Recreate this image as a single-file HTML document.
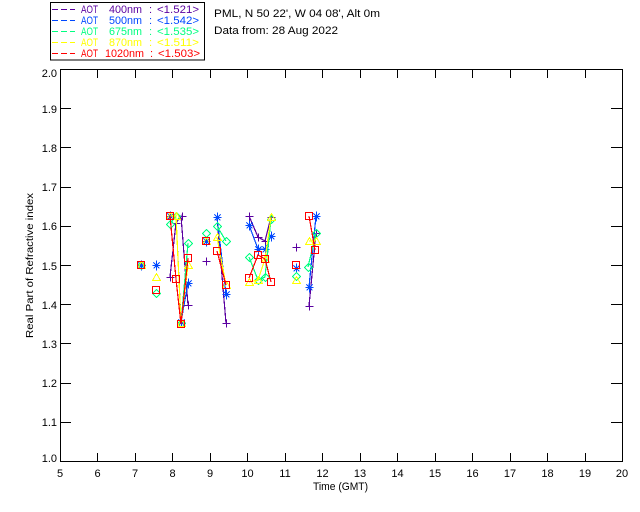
<!DOCTYPE html>
<html><head><meta charset="utf-8"><style>
html,body{margin:0;padding:0;background:#fff;width:640px;height:512px;overflow:hidden}
svg{display:block}
text{font-family:"Liberation Sans",sans-serif;font-size:11px;fill:#000}
.l text{font-size:11px}
.g{shape-rendering:crispEdges;fill:none;stroke-width:1}
.m>path{stroke-width:1.2}
</style></head><body>
<svg width="640" height="512" viewBox="0 0 640 512" xmlns="http://www.w3.org/2000/svg">
<defs>
<g id="p" transform="translate(.5 .5)"><path d="M-4 0H4M0-4V4"/></g>
<g id="a" transform="translate(.5 .5)"><path d="M-4 0H4M0-5V5M-3-3L3 3M3-3L-3 3M-1-1H1V1H-1Z"/></g>
<g id="d" transform="translate(.5 .5)"><path d="M0-4L4 0L0 4L-4 0Z"/></g>
<g id="t" transform="translate(.5 .5)"><path d="M0-4L4 3H-4Z"/></g>
<g id="s"><rect x="-3.5" y="-3.5" width="7" height="7"/></g>
</defs>
<g class="g" stroke="#000">
<rect x="50.5" y="2.5" width="154" height="57.5"/>
<rect x="60.5" y="69.5" width="562" height="392"/>
<path d="M60 422.5h11M60 383.5h11M60 343.5h11M60 304.5h11M60 265.5h11M60 226.5h11M60 187.5h11M60 147.5h11M60 108.5h11M622 422.5h-11M622 383.5h-11M622 343.5h-11M622 304.5h-11M622 265.5h-11M622 226.5h-11M622 187.5h-11M622 147.5h-11M622 108.5h-11"/>
<path d="M97.5 461v-8M135.5 461v-8M172.5 461v-8M210.5 461v-8M247.5 461v-8M285.5 461v-8M322.5 461v-8M360.5 461v-8M397.5 461v-8M435.5 461v-8M472.5 461v-8M510.5 461v-8M547.5 461v-8M585.5 461v-8M97.5 70v8M135.5 70v8M172.5 70v8M210.5 70v8M247.5 70v8M285.5 70v8M322.5 70v8M360.5 70v8M397.5 70v8M435.5 70v8M472.5 70v8M510.5 70v8M547.5 70v8M585.5 70v8"/>
</g>
<g class="g" stroke-dasharray="6 3">
<path stroke="#5a00a0" d="M52 9.5H75"/>
<path stroke="#0048ff" d="M52 20.5H75"/>
<path stroke="#00ff80" d="M52 31.5H75"/>
<path stroke="#ffff00" d="M52 42.5H75"/>
<path stroke="#ff0000" d="M52 53.5H75"/>
</g>
<g class="l">
<g style="fill:#5a00a0"><text style="fill:inherit" x="81" y="13" textLength="17" lengthAdjust="spacingAndGlyphs">AOT</text><text style="fill:inherit" x="109" y="13" textLength="33" lengthAdjust="spacingAndGlyphs">400nm</text><text style="fill:inherit" x="149" y="13">:</text><text style="fill:inherit" x="157" y="13" textLength="42" lengthAdjust="spacingAndGlyphs">&lt;1.521&gt;</text></g>
<g style="fill:#0048ff"><text style="fill:inherit" x="81" y="24" textLength="17" lengthAdjust="spacingAndGlyphs">AOT</text><text style="fill:inherit" x="109" y="24" textLength="33" lengthAdjust="spacingAndGlyphs">500nm</text><text style="fill:inherit" x="149" y="24">:</text><text style="fill:inherit" x="157" y="24" textLength="42" lengthAdjust="spacingAndGlyphs">&lt;1.542&gt;</text></g>
<g style="fill:#00ff80"><text style="fill:inherit" x="81" y="35" textLength="17" lengthAdjust="spacingAndGlyphs">AOT</text><text style="fill:inherit" x="109" y="35" textLength="33" lengthAdjust="spacingAndGlyphs">675nm</text><text style="fill:inherit" x="149" y="35">:</text><text style="fill:inherit" x="157" y="35" textLength="42" lengthAdjust="spacingAndGlyphs">&lt;1.535&gt;</text></g>
<g style="fill:#ffff00"><text style="fill:inherit" x="81" y="46" textLength="17" lengthAdjust="spacingAndGlyphs">AOT</text><text style="fill:inherit" x="109" y="46" textLength="33" lengthAdjust="spacingAndGlyphs">870nm</text><text style="fill:inherit" x="149" y="46">:</text><text style="fill:inherit" x="157" y="46" textLength="42" lengthAdjust="spacingAndGlyphs">&lt;1.511&gt;</text></g>
<g style="fill:#ff0000"><text style="fill:inherit" x="81" y="57" textLength="17" lengthAdjust="spacingAndGlyphs">AOT</text><text style="fill:inherit" x="105" y="57" textLength="39" lengthAdjust="spacingAndGlyphs">1020nm</text><text style="fill:inherit" x="150" y="57">:</text><text style="fill:inherit" x="158" y="57" textLength="42" lengthAdjust="spacingAndGlyphs">&lt;1.503&gt;</text></g>
</g>
<text x="214" y="17" textLength="166" lengthAdjust="spacingAndGlyphs">PML, N 50 22', W 04 08', Alt 0m</text>
<text x="214" y="34" textLength="124" lengthAdjust="spacingAndGlyphs">Data from: 28 Aug 2022</text>
<g text-anchor="end">
<text x="57" y="77">2.0</text><text x="57" y="113">1.9</text><text x="57" y="152">1.8</text><text x="57" y="191">1.7</text><text x="57" y="230">1.6</text><text x="57" y="270">1.5</text><text x="57" y="309">1.4</text><text x="57" y="348">1.3</text><text x="57" y="387">1.2</text><text x="57" y="426">1.1</text><text x="57" y="462">1.0</text>
</g>
<g text-anchor="middle">
<text x="60" y="477">5</text><text x="97.5" y="477">6</text><text x="135" y="477">7</text><text x="172.5" y="477">8</text><text x="210" y="477">9</text><text x="247.5" y="477">10</text><text x="285" y="477">11</text><text x="322.5" y="477">12</text><text x="360" y="477">13</text><text x="397.5" y="477">14</text><text x="435" y="477">15</text><text x="472.5" y="477">16</text><text x="510" y="477">17</text><text x="547.5" y="477">18</text><text x="585" y="477">19</text><text x="622" y="477">20</text>
</g>
<text x="313" y="490" textLength="55" lengthAdjust="spacingAndGlyphs">Time (GMT)</text>
<text transform="translate(33 338) rotate(-90)" x="0" y="0" style="font-size:10.5px" textLength="145" lengthAdjust="spacingAndGlyphs">Real Part of Refractive index</text>

<g class="g m" stroke="#5a00a0">
<path d="M170 277L176 223L181 216L188 305M217 217L226 323M249 216L258 237L265 241L271 217M309 306L316 233"/>
<use href="#p" x="141" y="265"/><use href="#p" x="156" y="265"/><use href="#p" x="170" y="277"/><use href="#p" x="176" y="223"/><use href="#p" x="182" y="216"/><use href="#p" x="188" y="305"/><use href="#p" x="206" y="261"/><use href="#p" x="217" y="217"/><use href="#p" x="226" y="323"/><use href="#p" x="249" y="216"/><use href="#p" x="258" y="237"/><use href="#p" x="265" y="241"/><use href="#p" x="271" y="217"/><use href="#p" x="296" y="247"/><use href="#p" x="309" y="306"/><use href="#p" x="316" y="233"/>
</g>
<g class="g m" stroke="#0048ff">
<path d="M170 216L176 216L181 322L188 283M217 217L226 294M249 225L258 249L265 249L271 236M309 287L316 216"/>
<use href="#a" x="141" y="265"/><use href="#a" x="156" y="265"/><use href="#a" x="170" y="216"/><use href="#a" x="181" y="322"/><use href="#a" x="188" y="283"/><use href="#a" x="206" y="241"/><use href="#a" x="217" y="217"/><use href="#a" x="226" y="294"/><use href="#a" x="249" y="225"/><use href="#a" x="258" y="249"/><use href="#a" x="265" y="249"/><use href="#a" x="271" y="236"/><use href="#a" x="296" y="268"/><use href="#a" x="309" y="287"/><use href="#a" x="316" y="216"/>
</g>
<g class="g m" stroke="#00ff80">
<path d="M170 224L176 216L181 323L188 243M217 226L226 241M249 257L258 280L265 277L271 219M308 267L316 233"/>
<use href="#d" x="141" y="265"/><use href="#d" x="156" y="293"/><use href="#d" x="170" y="224"/><use href="#d" x="176" y="216"/><use href="#d" x="181" y="323"/><use href="#d" x="188" y="243"/><use href="#d" x="206" y="233"/><use href="#d" x="217" y="226"/><use href="#d" x="226" y="241"/><use href="#d" x="249" y="257"/><use href="#d" x="258" y="280"/><use href="#d" x="265" y="277"/><use href="#d" x="271" y="219"/><use href="#d" x="296" y="276"/><use href="#d" x="308" y="267"/><use href="#d" x="316" y="233"/>
</g>
<g class="g m" stroke="#ffff00">
<path d="M170 216L176 216L181 323L188 265M217 237L226 285M249 282L258 280L265 259L271 217M309 241L316 241"/>
<use href="#t" x="141" y="265"/><use href="#t" x="156" y="277"/><use href="#t" x="170" y="216"/><use href="#t" x="176" y="216"/><use href="#t" x="181" y="323"/><use href="#t" x="188" y="265"/><use href="#t" x="206" y="241"/><use href="#t" x="217" y="237"/><use href="#t" x="226" y="285"/><use href="#t" x="249" y="282"/><use href="#t" x="258" y="280"/><use href="#t" x="265" y="259"/><use href="#t" x="271" y="217"/><use href="#t" x="296" y="280"/><use href="#t" x="309" y="241"/><use href="#t" x="316" y="241"/>
</g>
<g class="g m" stroke="#ff0000">
<path d="M170 216L176 279L181 324L188 258M217 251L226 285M249 278L258 255L265 259L271 282M309 216L315 250"/>
<use href="#s" x="141" y="265"/><use href="#s" x="156" y="290"/><use href="#s" x="170" y="216"/><use href="#s" x="176" y="279"/><use href="#s" x="181" y="324"/><use href="#s" x="188" y="258"/><use href="#s" x="206" y="241"/><use href="#s" x="217" y="251"/><use href="#s" x="226" y="285"/><use href="#s" x="249" y="278"/><use href="#s" x="258" y="255"/><use href="#s" x="265" y="259"/><use href="#s" x="271" y="282"/><use href="#s" x="296" y="265"/><use href="#s" x="309" y="216"/><use href="#s" x="315" y="250"/>
</g>
</svg>
</body></html>
